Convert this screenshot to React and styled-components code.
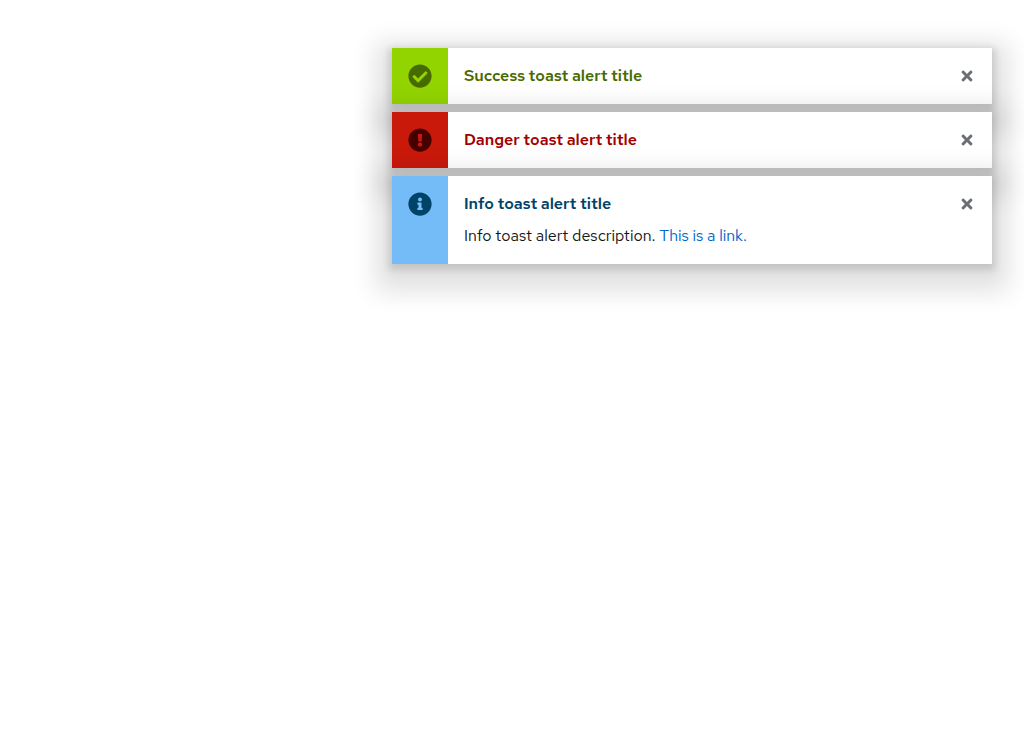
import React from "react";
import styled, { createGlobalStyle } from "styled-components";
import { FaCheckCircle, FaExclamationCircle, FaInfoCircle, FaTimes } from "react-icons/fa";

const GlobalStyle = createGlobalStyle`
  *, *::before, *::after { box-sizing: border-box; }
  body {
    margin: 0;
    background: #fff;
    color: #151515;
    font-family: "Red Hat Text", Lato, "Liberation Sans", sans-serif;
    font-size: 16px;
    line-height: 24px;
  }
`;

const variants = {
  success: { band: "#92d400", icon: "#486b00", title: "#486b00" },
  danger: { band: "#c9190b", icon: "#470000", title: "#a30000" },
  info: { band: "#73bcf7", icon: "#004368", title: "#004368" },
};

const ToastGroup = styled.ul`
  display: grid;
  gap: 8px;
  width: 100%;
  max-width: 664px;
  margin: 0 0 0 auto;
  padding: 48px 32px;
  list-style: none;
`;

const Toast = styled.li`
  display: grid;
  grid-template-columns: 56px 1fr auto;
  padding-right: 4px;
  background: #fff;
  box-shadow: 0 3px 7px 3px rgba(3, 3, 3, 0.13), 0 11px 24px 16px rgba(3, 3, 3, 0.12);
`;

const IconBand = styled.div`
  display: flex;
  justify-content: center;
  padding: 16px;
  background: ${({ $variant }) => variants[$variant].band};
  color: ${({ $variant }) => variants[$variant].icon};
  font-size: 24px;
`;

const Content = styled.div`
  padding: 16px;
`;

const Title = styled.h4`
  margin: 0;
  font-size: 16px;
  font-weight: 570;
  color: ${({ $variant }) => variants[$variant].title};
`;

const Description = styled.p`
  margin: 8px 0 0;
`;

const Link = styled.a`
  color: #06c;
  text-decoration: none;
  &:hover { text-decoration: underline; }
`;

const CloseButton = styled.button`
  display: flex;
  align-items: center;
  justify-content: center;
  align-self: start;
  width: 43px;
  height: 56px;
  padding: 0;
  border: 0;
  background: none;
  color: #6a6e73;
  font-size: 16px;
  cursor: pointer;
`;

const icons = { success: FaCheckCircle, danger: FaExclamationCircle, info: FaInfoCircle };

function ToastAlert({ variant, title, children }) {
  const Icon = icons[variant];
  return (
    <Toast>
      <IconBand $variant={variant}><Icon aria-hidden="true" /></IconBand>
      <Content>
        <Title $variant={variant}>{title}</Title>
        {children && <Description>{children}</Description>}
      </Content>
      <CloseButton type="button" aria-label={`Close ${title}`}><FaTimes aria-hidden="true" /></CloseButton>
    </Toast>
  );
}

export default function App() {
  return (
    <>
      <GlobalStyle />
      <ToastGroup>
        <ToastAlert variant="success" title="Success toast alert title" />
        <ToastAlert variant="danger" title="Danger toast alert title" />
        <ToastAlert variant="info" title="Info toast alert title">
          Info toast alert description. <Link href="#link">This is a link.</Link>
        </ToastAlert>
      </ToastGroup>
    </>
  );
}
